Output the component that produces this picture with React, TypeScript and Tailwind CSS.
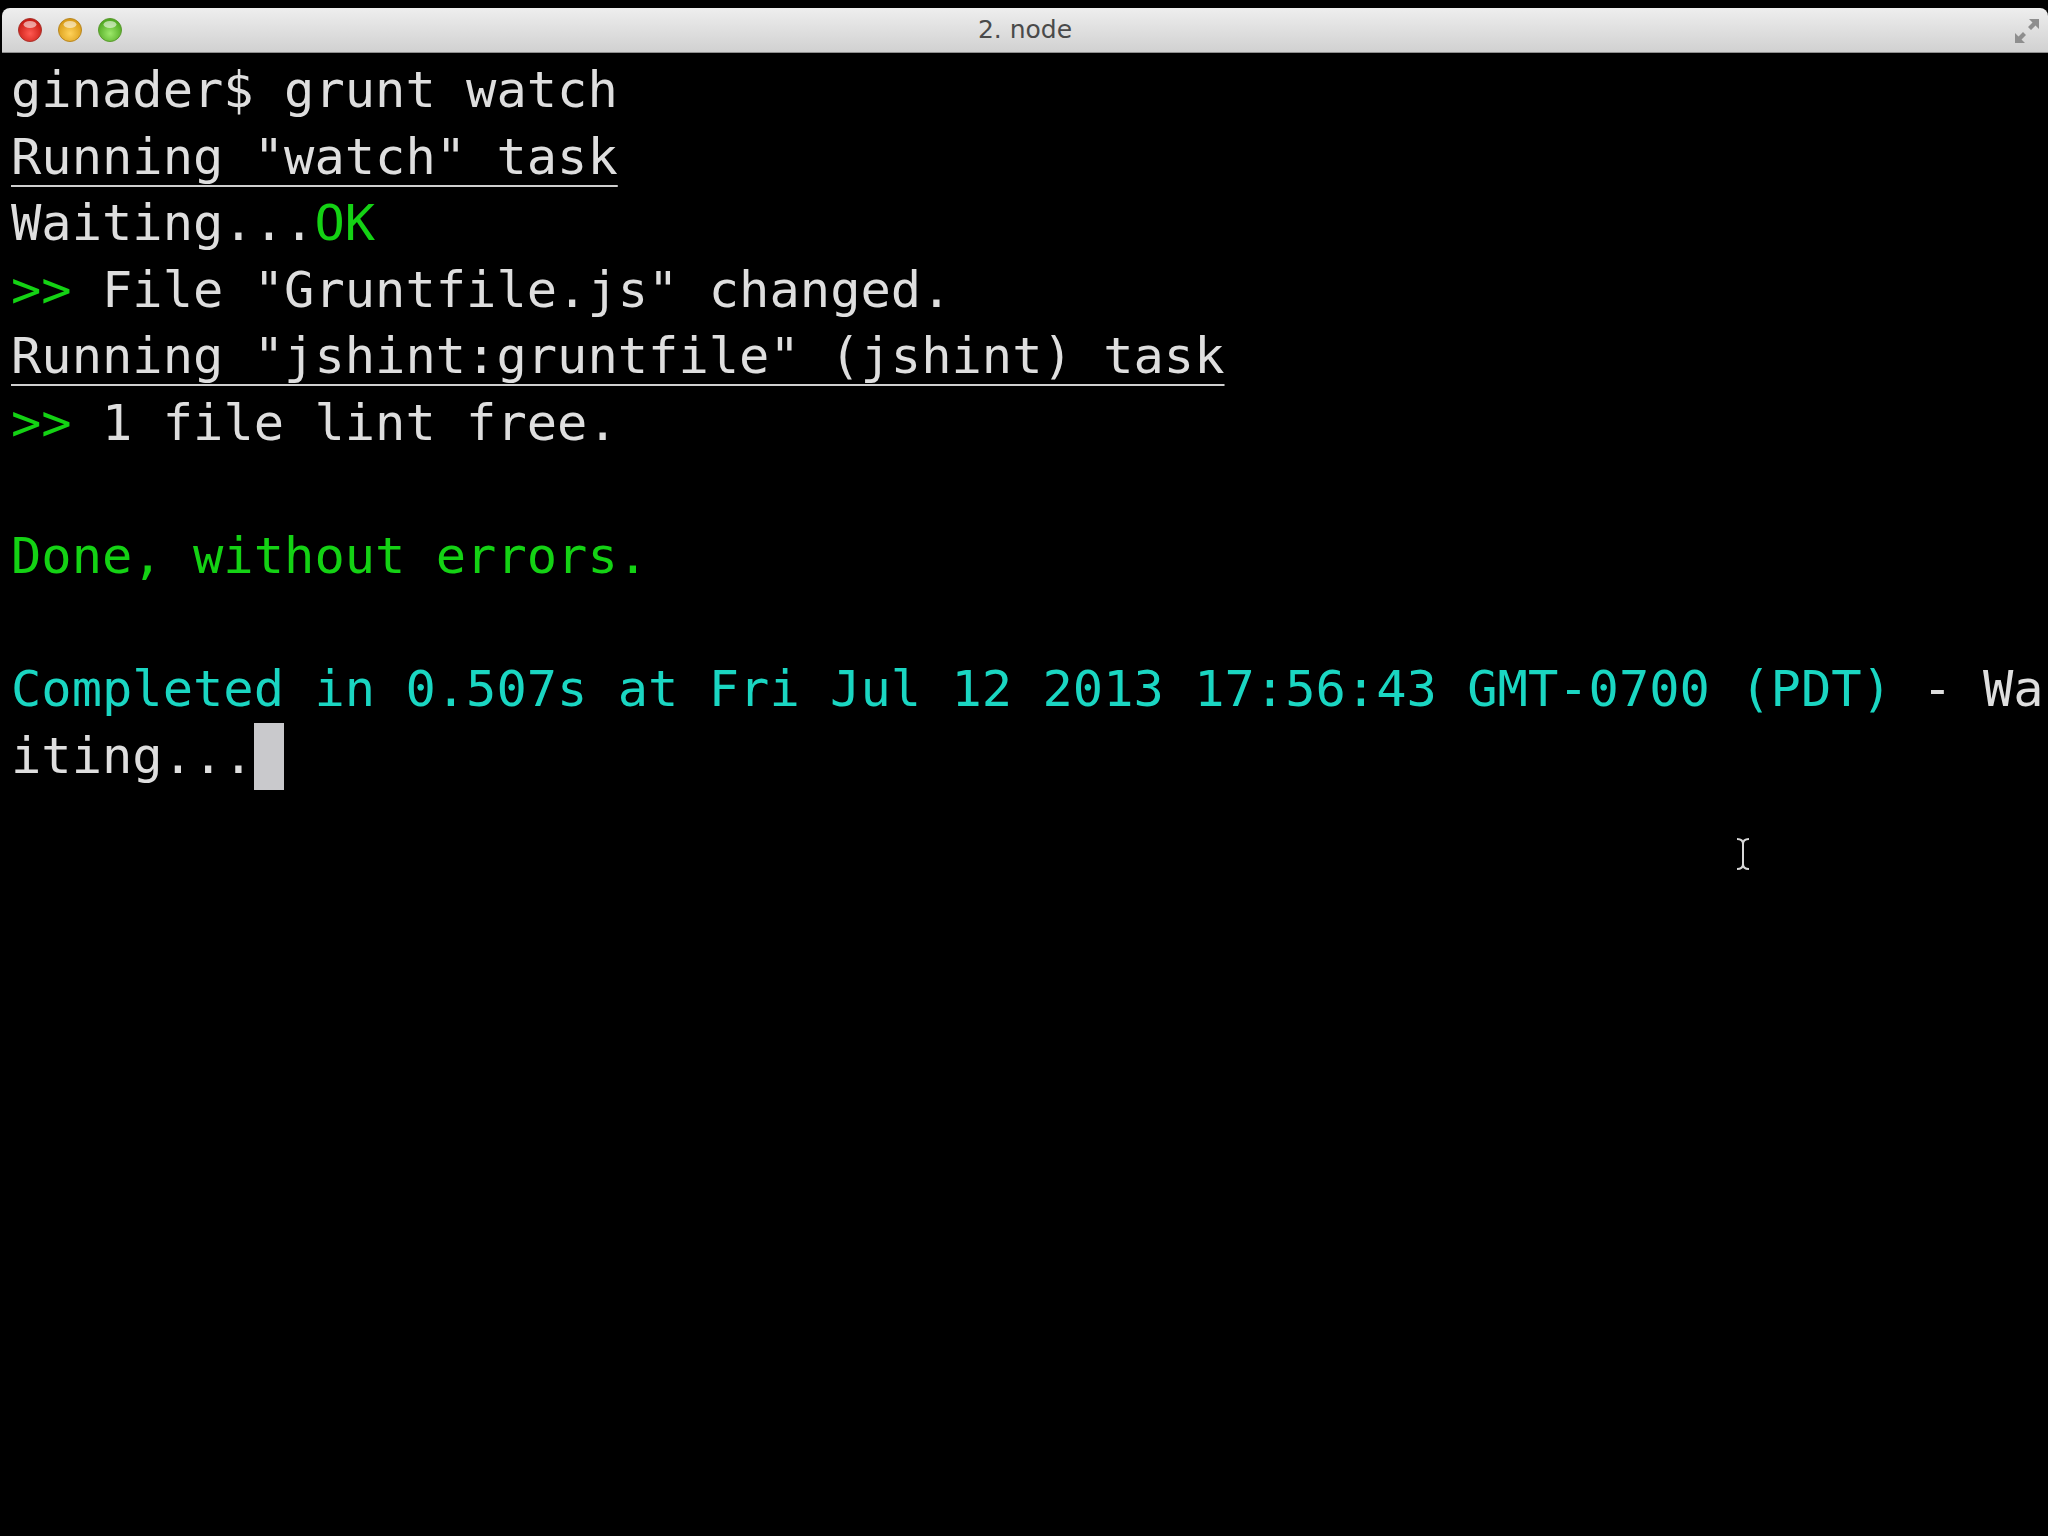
type Seg = { t: string; c?: "green" | "cyan"; u?: boolean }

const lines: Seg[][] = [
  [{ t: "ginader$ grunt watch" }],
  [{ t: 'Running "watch" task', u: true }],
  [{ t: "Waiting..." }, { t: "OK", c: "green" }],
  [{ t: ">>", c: "green" }, { t: ' File "Gruntfile.js" changed.' }],
  [{ t: 'Running "jshint:gruntfile" (jshint) task', u: true }],
  [{ t: ">>", c: "green" }, { t: " 1 file lint free." }],
  [],
  [{ t: "Done, without errors.", c: "green" }],
  [],
  [
    { t: "Completed in 0.507s at Fri Jul 12 2013 17:56:43 GMT-0700 (PDT)", c: "cyan" },
    { t: " - Wa" },
  ],
]

function TrafficLight({ from, to, edge }: { from: string; to: string; edge: string }) {
  const id = from.replace("#", "g")
  return (
    <svg width="26" height="26" viewBox="0 0 26 26">
      <defs>
        <radialGradient id={id} cx="50%" cy="65%" r="60%">
          <stop offset="0%" stopColor={from} />
          <stop offset="100%" stopColor={to} />
        </radialGradient>
      </defs>
      <circle cx="13" cy="13" r="11.5" fill={`url(#${id})`} stroke={edge} strokeWidth="1" />
      <ellipse cx="13" cy="7.5" rx="6.5" ry="3.5" fill="white" opacity="0.55" />
    </svg>
  )
}

function ResizeIcon() {
  return (
    <svg width="30" height="30" viewBox="0 0 30 30" fill="#8e8e8e">
      {/* up-right arrow */}
      <path d="M17 3 L27 3 L27 13 L23.5 9.5 L19 14 L16 11 L20.5 6.5 Z" />
      {/* down-left arrow */}
      <path d="M3 17 L3 27 L13 27 L9.5 23.5 L14 19 L11 16 L6.5 20.5 Z" />
    </svg>
  )
}

export default function App() {
  return (
    <div className="relative w-[2048px] h-[1536px] bg-black overflow-hidden">
      {/* Title bar */}
      <div className="ml-[2px] mt-[8px] h-[45px] rounded-t-[8px] bg-gradient-to-b from-[#eeeeee] to-[#d1d1d1] border-b border-[#8f8f8f] flex items-center relative">
        <div className="flex items-center gap-[14px] pl-[15px]">
          <TrafficLight from="#ff5a52" to="#c81a12" edge="#a8332d" />
          <TrafficLight from="#ffd25a" to="#d89a14" edge="#b88724" />
          <TrafficLight from="#9de86a" to="#4fa820" edge="#5b9a30" />
        </div>
        <div className="absolute inset-0 flex items-center justify-center text-[25px] text-[#4a4a4a] font-['DejaVu_Sans',sans-serif]">
          2. node
        </div>
        <div className="ml-auto pr-[6px] pt-[2px]">
          <ResizeIcon />
        </div>
      </div>

      {/* Terminal body */}
      <div className="pt-[4px] pl-[11px] font-['DejaVu_Sans_Mono',monospace] text-[50.4px] leading-[66.6px] text-[#dedede] whitespace-pre">
        {lines.map((line, i) => (
          <div key={i} className="h-[66.6px]">
            {line.map((s, j) => (
              <span
                key={j}
                className={
                  (s.c === "green" ? "text-[#14d214]" : s.c === "cyan" ? "text-[#1ad6c2]" : "") +
                  (s.u ? " underline decoration-[2px] underline-offset-[11px] decoration-[#cfcfcf]" : "")
                }
              >
                {s.t}
              </span>
            ))}
          </div>
        ))}
        <div className="h-[66.6px] flex">
          <span>iting...</span>
          <span className="inline-block w-[30px] h-[66.6px] bg-[#c9c9cc]" />
        </div>
      </div>

      {/* mouse I-beam */}
      <svg
        className="absolute left-[1734px] top-[836px]"
        width="18"
        height="36"
        viewBox="0 0 18 36"
        fill="none"
        stroke="#d8d8d8"
        strokeWidth="2"
      >
        <path d="M3 3 Q9 3 9 8 Q9 3 15 3" />
        <path d="M9 8 L9 28" />
        <path d="M3 33 Q9 33 9 28 Q9 33 15 33" />
      </svg>
    </div>
  )
}
